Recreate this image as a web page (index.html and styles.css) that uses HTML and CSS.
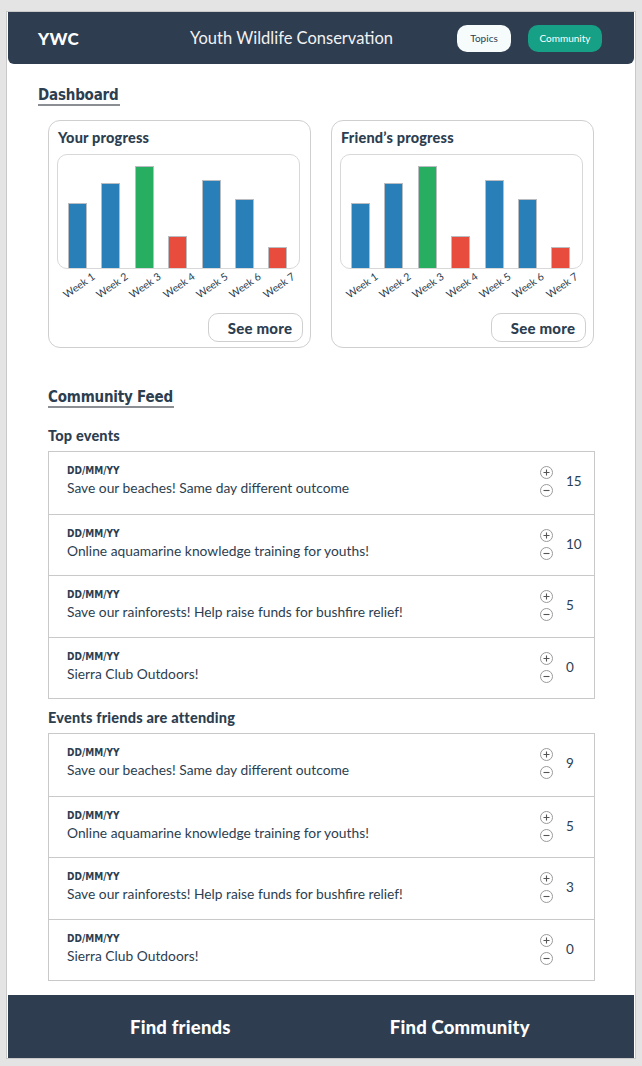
FILE: index.html
```html
<!DOCTYPE html>
<html>
<head>
<meta charset="utf-8">
<link rel="stylesheet" href="styles.css">
</head>
<body>
<div class="frame">
  <header class="topbar">
    <div class="brand">YWC</div>
    <div class="site-title">Youth Wildlife Conservation</div>
    <nav class="nav">
      <span class="btn btn-light">Topics</span>
      <span class="btn btn-teal">Community</span>
    </nav>
  </header>

  <main class="main">
    <h1 class="section-title dash-title">Dashboard</h1>

    <div class="cards">
      <section class="card">
        <h2 class="card-title">Your progress</h2>
        <div class="chart">
          <div class="bar blue" style="height:65px"></div>
          <div class="bar blue" style="height:85px"></div>
          <div class="bar green" style="height:102px"></div>
          <div class="bar red" style="height:32px"></div>
          <div class="bar blue" style="height:88px"></div>
          <div class="bar blue" style="height:69px"></div>
          <div class="bar red" style="height:21px"></div>
        </div>
        <div class="labels">
          <div class="lab"><span>Week 1</span></div>
          <div class="lab"><span>Week 2</span></div>
          <div class="lab"><span>Week 3</span></div>
          <div class="lab"><span>Week 4</span></div>
          <div class="lab"><span>Week 5</span></div>
          <div class="lab"><span>Week 6</span></div>
          <div class="lab"><span>Week 7</span></div>
        </div>
        <div class="card-foot"><span class="see-more">See more</span></div>
      </section>

      <section class="card">
        <h2 class="card-title">Friend’s progress</h2>
        <div class="chart">
          <div class="bar blue" style="height:65px"></div>
          <div class="bar blue" style="height:85px"></div>
          <div class="bar green" style="height:102px"></div>
          <div class="bar red" style="height:32px"></div>
          <div class="bar blue" style="height:88px"></div>
          <div class="bar blue" style="height:69px"></div>
          <div class="bar red" style="height:21px"></div>
        </div>
        <div class="labels">
          <div class="lab"><span>Week 1</span></div>
          <div class="lab"><span>Week 2</span></div>
          <div class="lab"><span>Week 3</span></div>
          <div class="lab"><span>Week 4</span></div>
          <div class="lab"><span>Week 5</span></div>
          <div class="lab"><span>Week 6</span></div>
          <div class="lab"><span>Week 7</span></div>
        </div>
        <div class="card-foot"><span class="see-more">See more</span></div>
      </section>
    </div>

    <h1 class="section-title feed-title">Community Feed</h1>

    <h3 class="list-title first">Top events</h3>
    <div class="list">
      <div class="row">
        <div class="row-text"><div class="date">DD/MM/YY</div><div class="event">Save our beaches! Same day different outcome</div></div>
        <div class="votes"><svg class="ic" viewBox="0 0 13 13"><circle cx="6.5" cy="6.5" r="6" /><path d="M3.5 6.5h6M6.5 3.5v6"/></svg><svg class="ic" viewBox="0 0 13 13"><circle cx="6.5" cy="6.5" r="6" /><path d="M3.5 6.5h6"/></svg></div>
        <div class="count">15</div>
      </div>
      <div class="row">
        <div class="row-text"><div class="date">DD/MM/YY</div><div class="event">Online aquamarine knowledge training for youths!</div></div>
        <div class="votes"><svg class="ic" viewBox="0 0 13 13"><circle cx="6.5" cy="6.5" r="6" /><path d="M3.5 6.5h6M6.5 3.5v6"/></svg><svg class="ic" viewBox="0 0 13 13"><circle cx="6.5" cy="6.5" r="6" /><path d="M3.5 6.5h6"/></svg></div>
        <div class="count">10</div>
      </div>
      <div class="row">
        <div class="row-text"><div class="date">DD/MM/YY</div><div class="event">Save our rainforests! Help raise funds for bushfire relief!</div></div>
        <div class="votes"><svg class="ic" viewBox="0 0 13 13"><circle cx="6.5" cy="6.5" r="6" /><path d="M3.5 6.5h6M6.5 3.5v6"/></svg><svg class="ic" viewBox="0 0 13 13"><circle cx="6.5" cy="6.5" r="6" /><path d="M3.5 6.5h6"/></svg></div>
        <div class="count">5</div>
      </div>
      <div class="row">
        <div class="row-text"><div class="date">DD/MM/YY</div><div class="event">Sierra Club Outdoors!</div></div>
        <div class="votes"><svg class="ic" viewBox="0 0 13 13"><circle cx="6.5" cy="6.5" r="6" /><path d="M3.5 6.5h6M6.5 3.5v6"/></svg><svg class="ic" viewBox="0 0 13 13"><circle cx="6.5" cy="6.5" r="6" /><path d="M3.5 6.5h6"/></svg></div>
        <div class="count">0</div>
      </div>
    </div>

    <h3 class="list-title">Events friends are attending</h3>
    <div class="list">
      <div class="row">
        <div class="row-text"><div class="date">DD/MM/YY</div><div class="event">Save our beaches! Same day different outcome</div></div>
        <div class="votes"><svg class="ic" viewBox="0 0 13 13"><circle cx="6.5" cy="6.5" r="6" /><path d="M3.5 6.5h6M6.5 3.5v6"/></svg><svg class="ic" viewBox="0 0 13 13"><circle cx="6.5" cy="6.5" r="6" /><path d="M3.5 6.5h6"/></svg></div>
        <div class="count">9</div>
      </div>
      <div class="row">
        <div class="row-text"><div class="date">DD/MM/YY</div><div class="event">Online aquamarine knowledge training for youths!</div></div>
        <div class="votes"><svg class="ic" viewBox="0 0 13 13"><circle cx="6.5" cy="6.5" r="6" /><path d="M3.5 6.5h6M6.5 3.5v6"/></svg><svg class="ic" viewBox="0 0 13 13"><circle cx="6.5" cy="6.5" r="6" /><path d="M3.5 6.5h6"/></svg></div>
        <div class="count">5</div>
      </div>
      <div class="row">
        <div class="row-text"><div class="date">DD/MM/YY</div><div class="event">Save our rainforests! Help raise funds for bushfire relief!</div></div>
        <div class="votes"><svg class="ic" viewBox="0 0 13 13"><circle cx="6.5" cy="6.5" r="6" /><path d="M3.5 6.5h6M6.5 3.5v6"/></svg><svg class="ic" viewBox="0 0 13 13"><circle cx="6.5" cy="6.5" r="6" /><path d="M3.5 6.5h6"/></svg></div>
        <div class="count">3</div>
      </div>
      <div class="row">
        <div class="row-text"><div class="date">DD/MM/YY</div><div class="event">Sierra Club Outdoors!</div></div>
        <div class="votes"><svg class="ic" viewBox="0 0 13 13"><circle cx="6.5" cy="6.5" r="6" /><path d="M3.5 6.5h6M6.5 3.5v6"/></svg><svg class="ic" viewBox="0 0 13 13"><circle cx="6.5" cy="6.5" r="6" /><path d="M3.5 6.5h6"/></svg></div>
        <div class="count">0</div>
      </div>
    </div>
  </main>

  <footer class="footer">
    <span class="foot-link">Find friends</span>
    <span class="foot-link">Find Community</span>
  </footer>
</div>
</body>
</html>
```

FILE: styles.css
```css
* { box-sizing: border-box; }
html, body { margin: 0; padding: 0; }
body {
  background: #e4e4e4;
  font-family: Lato, "Noto Sans", sans-serif;
  color: #2c3e50;
  padding: 11px 0 0 6px;
}
.frame {
  width: 630px;
  background: #fff;
  border: 1px solid #c9c9c9;
  padding: 0 1px;
}
.topbar {
  height: 52px;
  background: #2e3d50;
  border-radius: 0 0 6px 6px;
  display: flex;
  align-items: center;
  padding: 0 32px 0 30px;
  color: #fff;
}
.brand {
  width: 152px;
  font-weight: 900;
  font-size: 17px;
  letter-spacing: 0.3px;
}
.site-title {
  font-size: 16.5px;
  font-weight: 400;
  color: #f2f2f2;
}
.nav {
  margin-left: auto;
  display: flex;
  gap: 17px;
}
.btn {
  height: 27px;
  border-radius: 10px;
  font-size: 10px;
  display: flex;
  align-items: center;
  justify-content: center;
}
.btn-light { width: 54px; background: #f6fbfb; color: #2c3e50; }
.btn-teal { width: 74px; background: #16a085; color: #fff; }

.main {
  padding: 0 39px 0 40px;
}
.section-title {
  display: inline-block;
  margin: 0;
  font-family: "DejaVu Sans Condensed", "DejaVu Sans", sans-serif;
  font-stretch: condensed;
  font-weight: 700;
  font-size: 15px;
  line-height: 18px;
  color: #2c3e50;
  border-bottom: 2px solid #8b8f94;
  padding-right: 1px;
  letter-spacing: -0.2px;
}
.dash-title { margin: 22px 0 0 -10px; }
.feed-title { margin-top: 40px; display: table; }

.cards {
  display: flex;
  gap: 20px;
  margin-top: 14px;
}
.card {
  width: 263px;
  border: 1px solid #cfcfcf;
  border-radius: 12px;
  padding: 8px 7px 5px 8px;
}
.card-title {
  margin: 0;
  padding-left: 1px;
  font-size: 14.5px;
  line-height: 18px;
  font-weight: 900;
  letter-spacing: 0.2px;
}
.chart {
  margin: 7px 3px 0 0;
  height: 115px;
  border: 1px solid #d8d8d8;
  border-radius: 10px;
  display: flex;
  align-items: flex-end;
  padding: 0 10px;
  gap: 14.4px;
}
.bar {
  width: 19px;
  border: 1px solid #b9bcc0;
  border-bottom: none;
}
.blue { background: #2980b9; }
.green { background: #27ae60; }
.red { background: #e74c3c; }
.labels {
  margin-right: 3px;
  height: 44px;
  display: flex;
  padding: 0 11px;
  gap: 14.4px;
}
.lab {
  width: 19px;
  flex: none;
  display: flex;
  justify-content: flex-end;
  align-items: flex-start;
}
.lab span {
  white-space: nowrap;
  font-size: 10.5px;
  line-height: 11px;
  margin-top: 2px;
  margin-right: -3px;
  transform-origin: 100% 0;
  transform: rotate(-35deg);
  color: #2c3e50;
}
.card-foot {
  display: flex;
  justify-content: flex-end;
}
.see-more {
  width: 95px;
  height: 29px;
  border: 1px solid #cfcfcf;
  border-radius: 10px;
  display: flex;
  align-items: center;
  justify-content: center;
  font-size: 15px;
  font-weight: 900;
  padding-left: 9px;
  letter-spacing: 0.2px;
}

.list-title {
  margin: 11px 0 7px;
  font-size: 14.5px;
  line-height: 16px;
  font-weight: 900;
  letter-spacing: 0.2px;
}
.list-title.first { margin-top: 20px; }
.list {
  border: 1px solid #c9c9c9;
}
.row {
  height: 61.5px;
  display: flex;
  align-items: flex-start;
  padding: 13px 14px 0 18px;
}
.row + .row { border-top: 1px solid #c9c9c9; }
.row-text { flex: 1; }
.date {
  font-family: "DejaVu Sans Condensed", "DejaVu Sans", sans-serif;
  font-stretch: condensed;
  font-weight: 700;
  font-size: 10px;
  line-height: 12px;
  margin-bottom: 2px;
}
.event {
  font-size: 13.8px;
  line-height: 18px;
}
.votes {
  display: flex;
  flex-direction: column;
  gap: 5px;
  margin-top: 1px;
}
.ic {
  width: 13px;
  height: 13px;
  fill: none;
  stroke: #9a9a9a;
  stroke-width: 1;
}
.ic path { stroke: #555; stroke-width: 1.1; }
.count {
  width: 27px;
  padding-left: 13px;
  font-size: 13.5px;
  line-height: 18px;
  margin-top: 7px;
}

.footer {
  margin-top: 14px;
  height: 63px;
  background: #2e3d50;
  display: flex;
  align-items: center;
  justify-content: flex-start;
  padding-left: 122px;
  gap: 159px;
}
.foot-link {
  color: #fff;
  font-weight: 900;
  font-size: 18.5px;
  letter-spacing: 0.2px;
}
```
